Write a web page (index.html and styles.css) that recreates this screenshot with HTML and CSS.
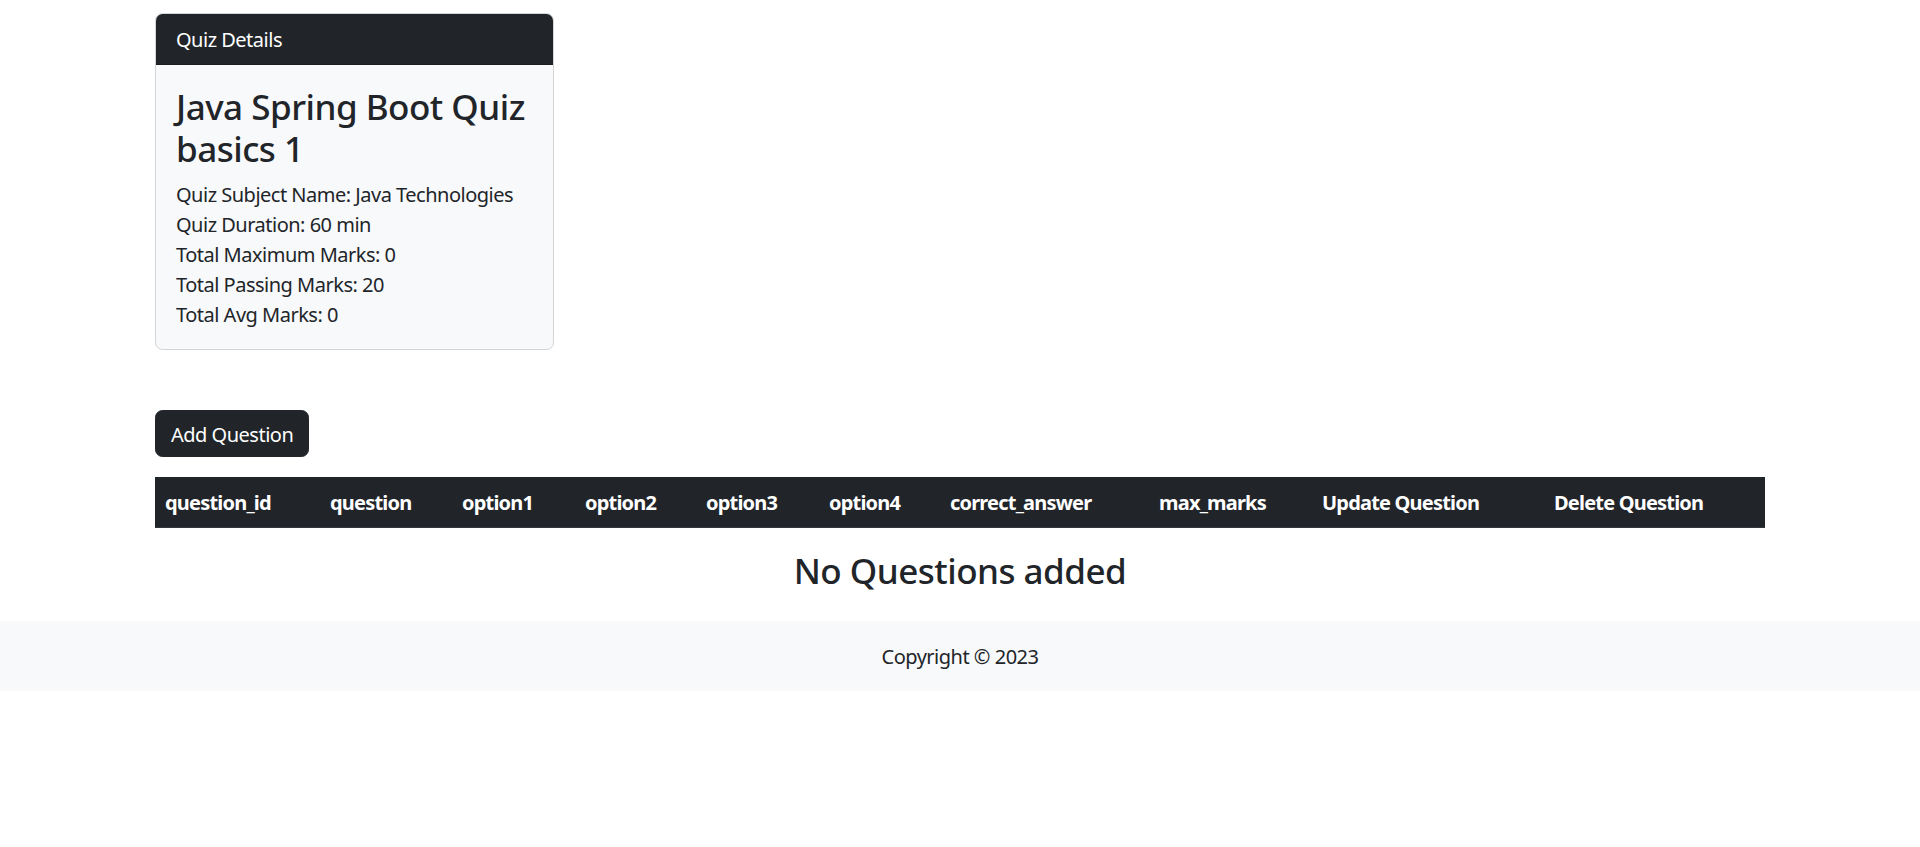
FILE: index.html
```html
<!DOCTYPE html>
<html lang="en">
<head>
<meta charset="utf-8">
<title>Quiz Details</title>
<link rel="stylesheet" href="styles.css">
</head>
<body>
<main class="container">
  <section class="card">
    <div class="card-header">Quiz Details</div>
    <div class="card-body">
      <h3 class="card-title">Java Spring Boot Quiz basics 1</h3>
      <p class="card-line">Quiz Subject Name: Java Technologies</p>
      <p class="card-line">Quiz Duration: 60 min</p>
      <p class="card-line">Total Maximum Marks: 0</p>
      <p class="card-line">Total Passing Marks: 20</p>
      <p class="card-line">Total Avg Marks: 0</p>
    </div>
  </section>

  <button class="btn" type="button">Add Question</button>

  <table class="qtable">
    <colgroup>
      <col class="c1"><col class="c2"><col class="c3"><col class="c4"><col class="c5">
      <col class="c6"><col class="c7"><col class="c8"><col class="c9"><col class="c10">
    </colgroup>
    <thead>
      <tr>
        <th>question_id</th>
        <th>question</th>
        <th>option1</th>
        <th>option2</th>
        <th>option3</th>
        <th>option4</th>
        <th>correct_answer</th>
        <th>max_marks</th>
        <th>Update Question</th>
        <th>Delete Question</th>
      </tr>
    </thead>
  </table>

  <h3 class="empty">No Questions added</h3>
</main>
<footer class="footer">Copyright © 2023</footer>
</body>
</html>
```
FILE: styles.css
```css
html, body {
  margin: 0;
  padding: 0;
  background: #ffffff;
}
body {
  font-family: "Noto Sans", "Open Sans", "Liberation Sans", sans-serif;
  font-size: 20px;
  line-height: 30px;
  letter-spacing: -0.025em;
  color: #212529;
}
.container {
  width: 1610px;
  margin: 0 auto;
  padding-top: 13px;
}
.card {
  width: 399px;
  box-sizing: border-box;
  background: #f8f9fa;
  border: 1.25px solid #d3d4d5;
  border-radius: 7.5px;
  overflow: hidden;
}
.card-header {
  background: #212529;
  color: #ffffff;
  padding: 11px 20px 9px;
  line-height: 30px;
  border-bottom: 1.25px solid rgba(0,0,0,0.175);
}
.card-body {
  padding: 21px 20px 19px;
}
.card-title {
  margin: 0 0 10px;
  font-size: 35px;
  line-height: 42px;
  font-weight: 500;
}
.card-line {
  margin: 0;
}
.btn {
  display: block;
  margin-top: 60px;
  font-family: inherit;
  font-size: 20px;
  line-height: 30px;
  letter-spacing: -0.025em;
  color: #ffffff;
  background: #212529;
  border: 1.25px solid #212529;
  border-radius: 7.5px;
  padding: 8.5px 15px 6.5px;
  cursor: pointer;
}
.qtable {
  margin-top: 20px;
  width: 1610px;
  table-layout: fixed;
  border-collapse: collapse;
  background: #212529;
  color: #ffffff;
}
.qtable th {
  text-align: left;
  padding: 11px 10px 9px;
  font-weight: 700;
  line-height: 30px;
  letter-spacing: -0.04em;
  white-space: nowrap;
  border-bottom: 1px solid #32383e;
}
.c1 { width: 165px; }
.c2 { width: 132px; }
.c3 { width: 123px; }
.c4 { width: 121px; }
.c5 { width: 123px; }
.c6 { width: 121px; }
.c7 { width: 209px; }
.c8 { width: 163px; }
.c9 { width: 232px; }
.c10 { width: 221px; }
.empty {
  margin: 21.5px 0 10px;
  text-align: center;
  font-size: 35px;
  line-height: 42px;
  font-weight: 500;
}
.footer {
  margin-top: 29px;
  background: #f8f9fa;
  padding: 21px 0 19px;
  text-align: center;
  line-height: 30px;
}
```
